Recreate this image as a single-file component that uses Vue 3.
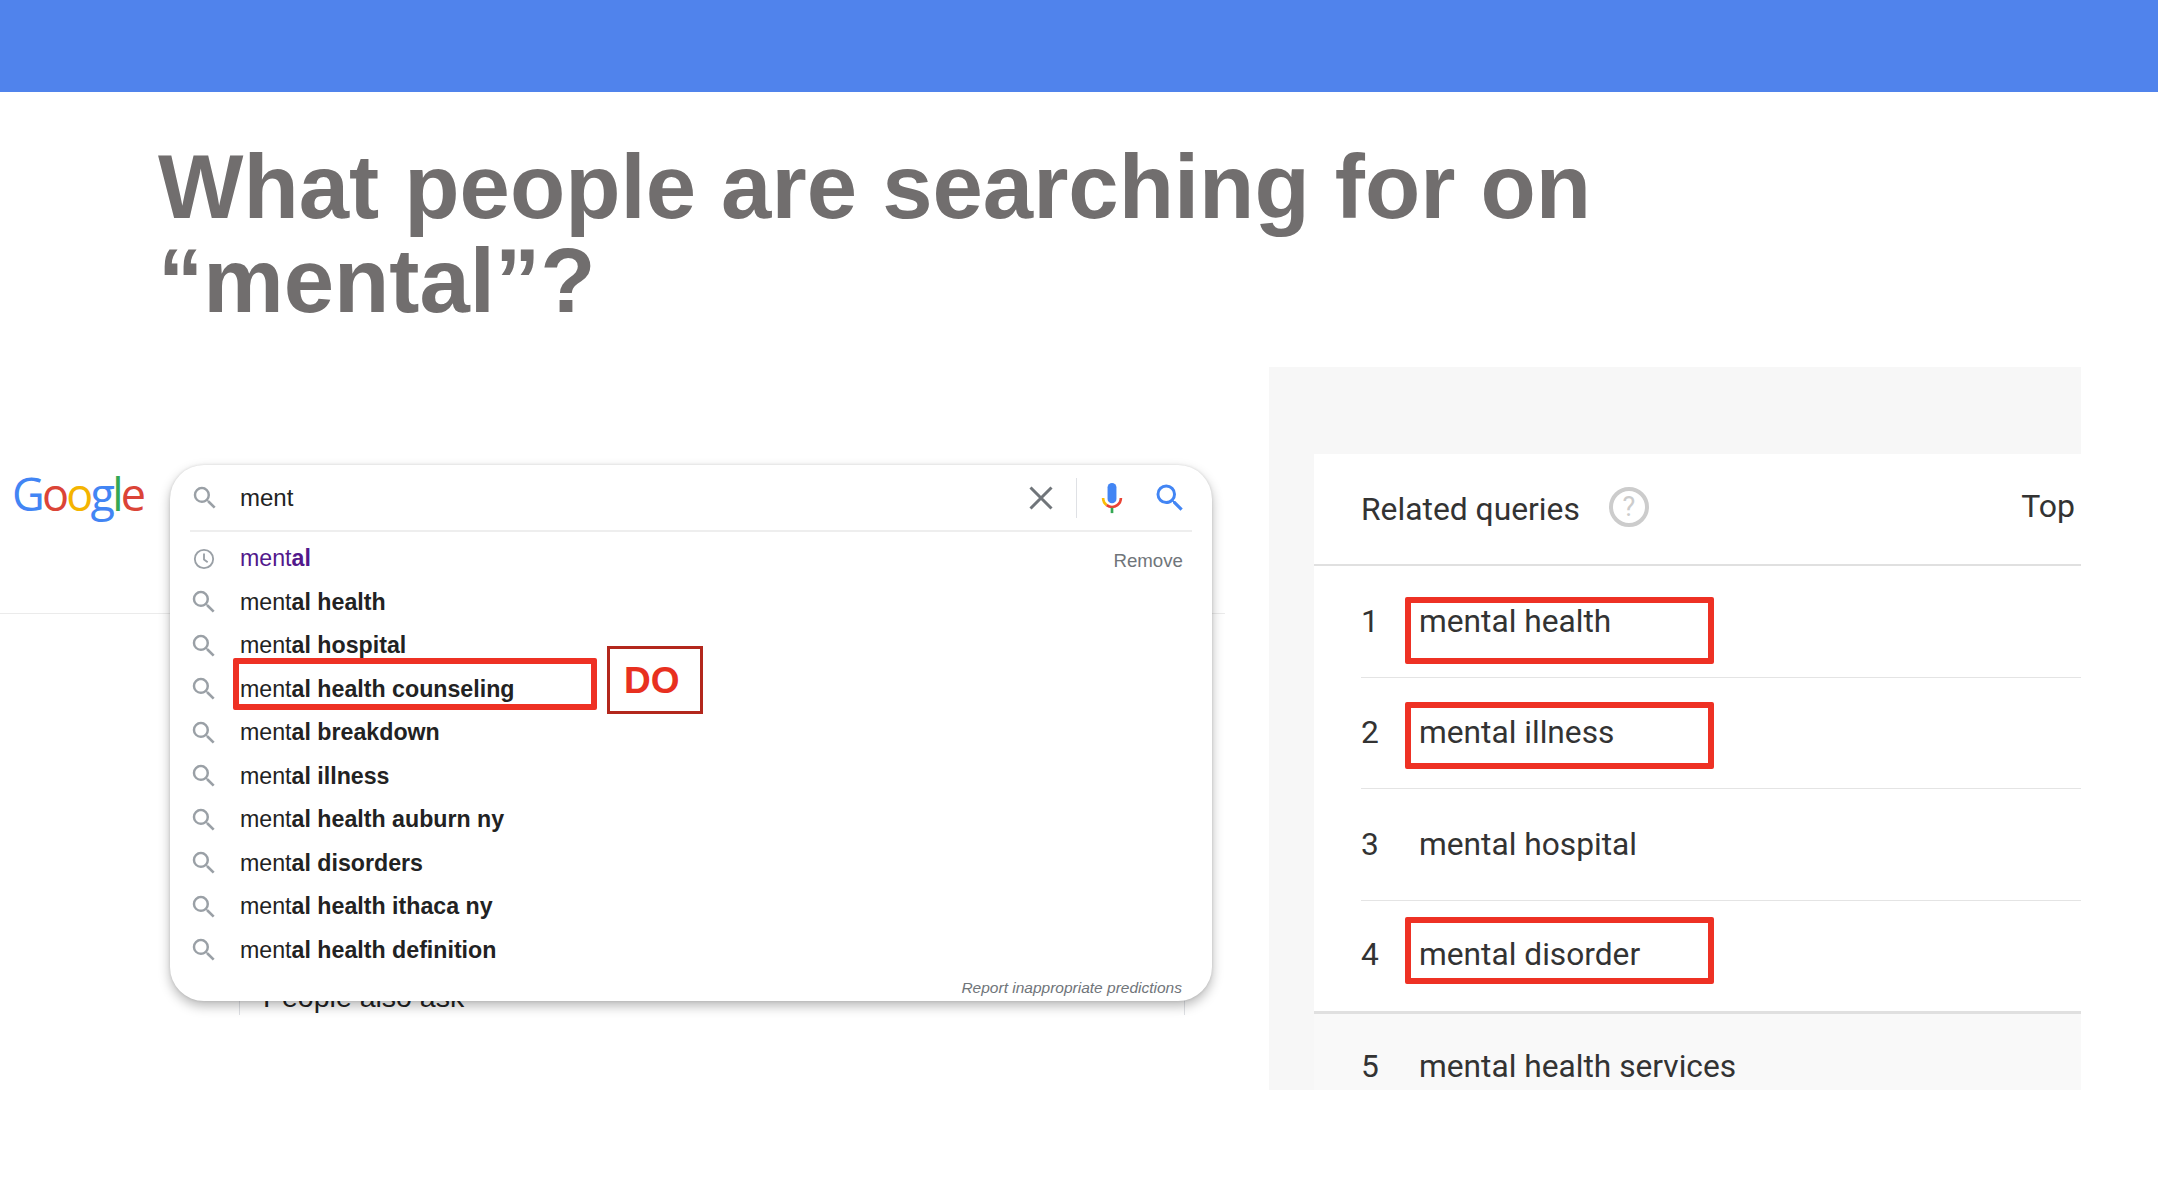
<script setup>
const suggestions = [
  { base: 'ment', rest: 'al', history: true },
  { base: 'ment', rest: 'al health' },
  { base: 'ment', rest: 'al hospital' },
  { base: 'ment', rest: 'al health counseling', marked: true },
  { base: 'ment', rest: 'al breakdown' },
  { base: 'ment', rest: 'al illness' },
  { base: 'ment', rest: 'al health auburn ny' },
  { base: 'ment', rest: 'al disorders' },
  { base: 'ment', rest: 'al health ithaca ny' },
  { base: 'ment', rest: 'al health definition' }
]

const queries = [
  { rank: 1, name: 'mental health', mark: 'low' },
  { rank: 2, name: 'mental illness', mark: 'mid' },
  { rank: 3, name: 'mental hospital' },
  { rank: 4, name: 'mental disorder', mark: 'high' },
  { rank: 5, name: 'mental health services', faded: true }
]

const lens = 'M15.5 14h-.79l-.28-.27A6.471 6.471 0 0 0 16 9.5 6.5 6.5 0 1 0 9.5 16c1.61 0 3.09-.59 4.23-1.57l.27.28v.79l5 4.99L20.49 19l-4.99-5zm-6 0C7.01 14 5 11.99 5 9.5S7.01 5 9.5 5 14 7.01 14 9.5 11.99 14 9.5 14z'
</script>

<template>
  <div class="slide">
    <div class="top-bar"></div>
    <h1 class="title">What people are searching for on<br>“mental”?</h1>

    <div class="content">
      <section class="serp">
        <div class="serp-rule"></div>
        <div class="serp-behind"><span>People also ask</span></div>

        <div class="logo">
          <span class="blue">G</span><span class="red">o</span><span class="yellow">o</span><span class="blue">g</span><span class="green">l</span><span class="red">e</span>
        </div>

        <div class="search-card">
          <div class="search-row">
            <svg class="row-icon" viewBox="0 0 24 24"><path :d="lens" /></svg>
            <span class="search-text">ment</span>
            <svg class="clear" viewBox="0 0 24 24"><path d="M3 3 21 21M21 3 3 21" /></svg>
            <span class="divider"></span>
            <svg class="mic" viewBox="0 0 24 36">
              <rect x="7" y="1" width="10" height="23" rx="5" fill="#4285f4" />
              <path d="M2 18a10 10 0 0 0 4 8" fill="none" stroke="#fbbc05" stroke-width="3" />
              <path d="M6 26a10 10 0 0 0 12 0 10 10 0 0 0 4-8" fill="none" stroke="#ea4335" stroke-width="3" />
              <rect x="10.5" y="29" width="3" height="6" fill="#34a853" />
            </svg>
            <svg class="go" viewBox="0 0 24 24"><path :d="lens" /></svg>
          </div>

          <ul class="suggestions">
            <li v-for="item in suggestions" :key="item.rest" class="suggestion">
              <svg v-if="item.history" class="row-icon clock" viewBox="0 0 24 24">
                <circle cx="12" cy="12" r="10" />
                <path d="M12 6v6.5l4 3" />
              </svg>
              <svg v-else class="row-icon" viewBox="0 0 24 24"><path :d="lens" /></svg>
              <span class="suggestion-text" :class="{ visited: item.history }">{{ item.base }}<b>{{ item.rest }}</b></span>
              <span v-if="item.history" class="remove">Remove</span>
              <template v-if="item.marked">
                <span class="suggestion-mark"></span>
                <span class="do-box">DO</span>
              </template>
            </li>
          </ul>

          <div class="report">Report inappropriate predictions</div>
        </div>
      </section>

      <section class="trends">
        <div class="trends-card">
          <header class="trends-head">
            <span class="trends-title">Related queries</span>
            <span class="help">?</span>
            <span class="trends-top">Top</span>
          </header>
          <div
            v-for="q in queries"
            :key="q.rank"
            class="query"
            :class="{ faded: q.faded }"
          >
            <span class="rank">{{ q.rank }}</span>
            <span class="query-name">{{ q.name }}</span>
            <span v-if="q.mark" class="query-mark" :class="q.mark"></span>
          </div>
        </div>
      </section>
    </div>
  </div>
</template>

<style>
html,
body {
  margin: 0;
  background: #fff;
}
</style>

<style scoped>
.slide {
  width: 2158px;
  height: 1202px;
  overflow: hidden;
  background: #fff;
  font-family: "Liberation Sans", Arial, sans-serif;
}

.top-bar {
  height: 92px;
  background: #5083ec;
}

.title {
  height: 275px;
  box-sizing: border-box;
  margin: 0;
  padding: 48px 0 0 158px;
  font-size: 90.5px;
  line-height: 94px;
  font-weight: 700;
  color: #716e6e;
}

.content {
  display: flex;
  height: 723px;
}

/* google side */
.serp {
  position: relative;
  display: flex;
  width: 1269px;
  padding-top: 98px;
  box-sizing: border-box;
}

.serp-rule {
  position: absolute;
  left: 0;
  top: 246px;
  width: 1225px;
  height: 1px;
  background: #ebebeb;
}

.serp-behind {
  position: absolute;
  left: 239px;
  top: 600px;
  width: 946px;
  height: 48px;
  box-sizing: border-box;
  padding: 14px 0 0 23px;
  overflow: hidden;
  border: solid #dfe1e5;
  border-width: 0 1px;
  font-size: 28.5px;
  line-height: 32px;
  color: #222;
}

.logo {
  position: relative;
  width: 170px;
  padding: 0 0 0 12px;
  margin-top: -1px;
  box-sizing: border-box;
  font-family: "Open Sans", sans-serif;
  font-size: 45px;
  line-height: 60px;
  letter-spacing: -2.8px;
}

.blue { color: #4285f4; }
.red { color: #db4437; }
.yellow { color: #f4b400; }
.green { color: #34a853; }

.search-card {
  position: relative;
  width: 1042px;
  height: 536px;
  background: #fff;
  border-radius: 34px;
  box-shadow: 0 5px 12px rgba(0, 0, 0, 0.28), 0 0 3px rgba(0, 0, 0, 0.12);
}

.search-row {
  display: flex;
  align-items: center;
  height: 65px;
  margin: 0 20px;
  border-bottom: 2px solid #eee;
}

.row-icon {
  flex: none;
  width: 30px;
  height: 30px;
  fill: #9aa0a6;
}

.search-text {
  flex: 1;
  margin-left: 20px;
  font-size: 24px;
  color: #222;
}

.clear {
  width: 28px;
  height: 28px;
  fill: none;
  stroke: #70757a;
  stroke-width: 2.6;
}

.divider {
  width: 1px;
  height: 40px;
  margin: 0 24px 0 21px;
  background: #dfe1e5;
}

.mic {
  width: 22px;
  height: 32px;
}

.go {
  width: 36px;
  height: 36px;
  margin: 0 4px 0 29px;
  fill: #4285f4;
}

.suggestions {
  margin: 5px 0 0;
  padding: 0;
  list-style: none;
}

.suggestion {
  position: relative;
  display: flex;
  align-items: center;
  height: 43.5px;
  padding-left: 19px;
}

.suggestion-text {
  margin-left: 21px;
  font-size: 23.2px;
  color: #222;
}

.suggestion-text b {
  font-weight: 700;
}

.suggestion-text.visited {
  color: #52188c;
}

.clock {
  width: 22px;
  height: 22px;
  margin: 0 4px;
  fill: none;
  stroke: #9aa0a6;
  stroke-width: 2;
}

.remove {
  margin: 4px 29px 0 auto;
  font-size: 18.7px;
  color: #70757a;
}

.suggestion-mark {
  position: absolute;
  left: 63px;
  top: -10px;
  width: 364px;
  height: 52px;
  box-sizing: border-box;
  border: 6px solid #ee3124;
  border-radius: 2px;
}

.do-box {
  position: absolute;
  left: 437px;
  top: -22px;
  display: flex;
  align-items: center;
  justify-content: flex-start;
  width: 96px;
  height: 68px;
  box-sizing: border-box;
  padding: 2px 0 0 14px;
  border: 3px solid #b3271c;
  font-size: 37px;
  font-weight: 700;
  color: #e8301f;
}

.report {
  position: absolute;
  right: 30px;
  bottom: 4px;
  font-size: 15.5px;
  font-style: italic;
  color: #70757a;
}

/* trends side */
.trends {
  width: 812px;
  padding-left: 45px;
  box-sizing: border-box;
  overflow: hidden;
  background: #f7f7f7;
}

.trends-card {
  margin-top: 87px;
  background: #fff;
  font-family: Roboto, sans-serif;
  color: #333;
}

.trends-head {
  display: flex;
  align-items: center;
  height: 110px;
  padding-left: 47px;
  border-bottom: 2px solid #e0e0e0;
}

.trends-title {
  font-size: 31.8px;
  color: #333;
}

.help {
  display: flex;
  align-items: center;
  justify-content: center;
  width: 40px;
  height: 40px;
  margin: -4px 0 0 29px;
  box-sizing: border-box;
  border: 4px solid #ccc;
  border-radius: 50%;
  font-size: 27px;
  color: #ccc;
}

.trends-top {
  margin: -6px 6px 0 auto;
  font-size: 32px;
}

.query {
  position: relative;
  display: flex;
  align-items: center;
  height: 111.5px;
  box-sizing: border-box;
  margin-left: 47px;
  border-bottom: 1px solid #e4e4e4;
  font-size: 31.7px;
}

.query:nth-child(5) {
  height: 113px;
  margin-left: 0;
  padding-left: 47px;
  padding-bottom: 2px;
  border-bottom: 3px solid #e0e0e0;
}

.query.faded {
  margin-left: 0;
  padding-left: 47px;
  padding-bottom: 5px;
  border-bottom: 0;
  background: #f9f9f9;
}

.rank {
  width: 58px;
}

.query-mark {
  position: absolute;
  left: 44px;
  width: 309px;
  height: 67px;
  box-sizing: border-box;
  border: 6px solid #ee3124;
  border-radius: 2px;
}

.query-mark.low { top: 31px; }
.query-mark.mid { top: 24px; }
.query-mark.high { top: 16px; left: 91px; }
</style>
